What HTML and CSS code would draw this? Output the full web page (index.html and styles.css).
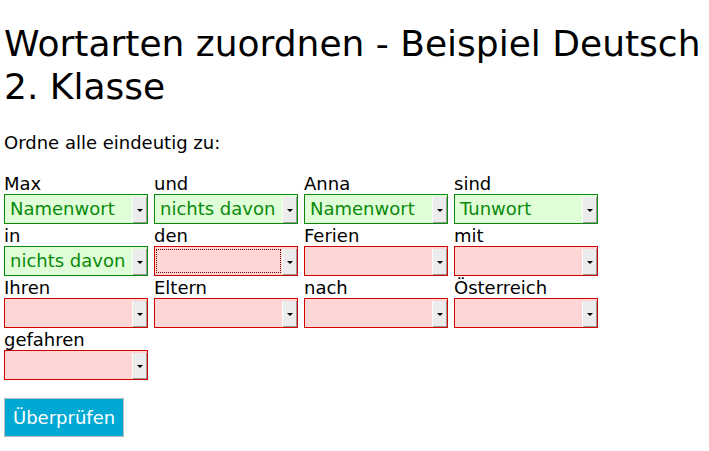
FILE: index.html
```html
<!DOCTYPE html>
<html lang="de">
<head>
<meta charset="utf-8">
<title>Wortarten zuordnen</title>
<link rel="stylesheet" href="styles.css">
</head>
<body>
<h1 class="title">Wortarten zuordnen - Beispiel Deutsch 2. Klasse</h1>
<p class="intro">Ordne alle eindeutig zu:</p>
<div class="grid">
  <div class="cell"><div class="word">Max</div><div class="select ok"><span class="value">Namenwort</span><span class="arrow"></span></div></div>
  <div class="cell"><div class="word">und</div><div class="select ok"><span class="value">nichts davon</span><span class="arrow"></span></div></div>
  <div class="cell"><div class="word">Anna</div><div class="select ok"><span class="value">Namenwort</span><span class="arrow"></span></div></div>
  <div class="cell"><div class="word">sind</div><div class="select ok"><span class="value">Tunwort</span><span class="arrow"></span></div></div>
  <div class="cell"><div class="word">in</div><div class="select ok"><span class="value">nichts davon</span><span class="arrow"></span></div></div>
  <div class="cell"><div class="word">den</div><div class="select bad"><span class="value focus"></span><span class="arrow"></span></div></div>
  <div class="cell"><div class="word">Ferien</div><div class="select bad"><span class="value"></span><span class="arrow"></span></div></div>
  <div class="cell"><div class="word">mit</div><div class="select bad"><span class="value"></span><span class="arrow"></span></div></div>
  <div class="cell"><div class="word">Ihren</div><div class="select bad"><span class="value"></span><span class="arrow"></span></div></div>
  <div class="cell"><div class="word">Eltern</div><div class="select bad"><span class="value"></span><span class="arrow"></span></div></div>
  <div class="cell"><div class="word">nach</div><div class="select bad"><span class="value"></span><span class="arrow"></span></div></div>
  <div class="cell"><div class="word">Österreich</div><div class="select bad"><span class="value"></span><span class="arrow"></span></div></div>
  <div class="cell"><div class="word">gefahren</div><div class="select bad"><span class="value"></span><span class="arrow"></span></div></div>
</div>
<button class="check" type="button">Überprüfen</button>
</body>
</html>
```
FILE: styles.css
```css
html, body {
  margin: 0;
  padding: 0;
  background: #fff;
}
body {
  padding: 0 4px;
  font-family: "DejaVu Sans", sans-serif;
  font-size: 18px;
  color: #000;
}
.title {
  font-size: 36px;
  font-weight: normal;
  line-height: 43px;
  margin: 22px 0 0 0;
}
.intro {
  margin: 24px 0 0 0;
  line-height: 21px;
}
.grid {
  display: grid;
  grid-template-columns: repeat(4, 150px);
  margin-top: 20px;
}
.cell {
  display: flex;
  flex-direction: column;
  padding-bottom: 1px;
}
.word {
  line-height: 21px;
}
.select {
  width: 144px;
  height: 30px;
  box-sizing: border-box;
  display: flex;
  align-items: stretch;
  padding: 1px 0 0 0;
}
.select.ok {
  border: 1px solid #0a8a0a;
  background: #e0ffd8;
  color: #0a8a0a;
}
.select.bad {
  border: 1px solid #d40000;
  background: #ffd6d6;
}
.value {
  flex: 1;
  padding-left: 5px;
  line-height: 26px;
  white-space: nowrap;
  overflow: hidden;
}
.value.focus {
  margin: 2px 2px 3px 2px;
  outline: 1px dotted #7a0000;
}
.arrow {
  width: 14px;
  margin: 1px 0 0 0;
  background: #ececec;
  border-left: 1px solid #fafafa;
  box-shadow: inset -1px -1px 0 #9a9a9a;
  display: flex;
  align-items: center;
  justify-content: center;
}
.arrow::before {
  content: "";
  border-left: 3px solid transparent;
  border-right: 3px solid transparent;
  border-top: 3px solid #000;
}
.check {
  display: block;
  box-sizing: border-box;
  height: 39px;
  margin-top: 17px;
  font-family: "DejaVu Sans", sans-serif;
  font-size: 18px;
  line-height: 21px;
  padding: 0 8px;
  color: #fff;
  background: #00a8d4;
  border: 1px solid #bbbbbb;
  border-radius: 0;
}
```
